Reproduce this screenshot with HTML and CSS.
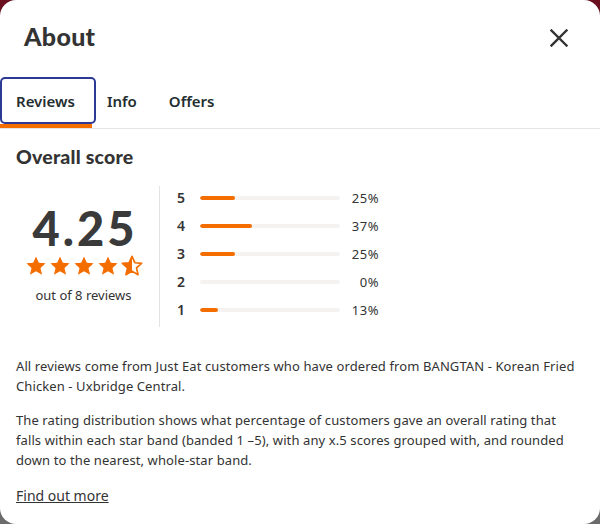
FILE: index.html
```html
<!DOCTYPE html>
<html lang="en">
<head>
<meta charset="utf-8">
<title>About</title>
<link rel="stylesheet" href="styles.css">
</head>
<body>
<div class="modal">
  <header class="header">
    <h1 class="title">About</h1>
    <button class="close" aria-label="Close">
      <svg width="18" height="18" viewBox="0 0 18 18"><path d="M1.5 1.5 L16.5 16.5 M16.5 1.5 L1.5 16.5" stroke="#333" stroke-width="2.4" stroke-linecap="square" fill="none"/></svg>
    </button>
  </header>
  <nav class="tabs">
    <div class="tab active"><span class="tab-label">Reviews</span><span class="tab-bar"></span></div>
    <div class="tab"><span class="tab-label">Info</span></div>
    <div class="tab"><span class="tab-label">Offers</span></div>
  </nav>
  <section class="content">
    <h2 class="subtitle">Overall score</h2>
    <div class="score">
      <div class="score-summary">
        <div class="score-value">4.25</div>
        <div class="stars">
          <svg class="star" viewBox="0 0 24 24"><path d="M12 1.5l3.1 6.9 7.4.7-5.6 5 1.7 7.4L12 17.6l-6.6 3.9 1.7-7.4-5.6-5 7.4-.7z" fill="#f36d00"/></svg>
          <svg class="star" viewBox="0 0 24 24"><path d="M12 1.5l3.1 6.9 7.4.7-5.6 5 1.7 7.4L12 17.6l-6.6 3.9 1.7-7.4-5.6-5 7.4-.7z" fill="#f36d00"/></svg>
          <svg class="star" viewBox="0 0 24 24"><path d="M12 1.5l3.1 6.9 7.4.7-5.6 5 1.7 7.4L12 17.6l-6.6 3.9 1.7-7.4-5.6-5 7.4-.7z" fill="#f36d00"/></svg>
          <svg class="star" viewBox="0 0 24 24"><path d="M12 1.5l3.1 6.9 7.4.7-5.6 5 1.7 7.4L12 17.6l-6.6 3.9 1.7-7.4-5.6-5 7.4-.7z" fill="#f36d00"/></svg>
          <svg class="star" viewBox="0 0 24 24"><path d="M12 1.5l3.1 6.9 7.4.7-5.6 5 1.7 7.4L12 17.6l-6.6 3.9 1.7-7.4-5.6-5 7.4-.7z" fill="none" stroke="#f36d00" stroke-width="1.8" stroke-linejoin="round"/><path d="M12 1.5v16.1l-6.6 3.9 1.7-7.4-5.6-5 7.4-.7z" fill="#f36d00"/></svg>
        </div>
        <div class="score-count">out of 8 reviews</div>
      </div>
      <div class="distribution">
        <div class="dist-row"><span class="dist-star">5</span><span class="dist-track"><span class="dist-fill" style="width:25%"></span></span><span class="dist-pct">25%</span></div>
        <div class="dist-row"><span class="dist-star">4</span><span class="dist-track"><span class="dist-fill" style="width:37%"></span></span><span class="dist-pct">37%</span></div>
        <div class="dist-row"><span class="dist-star">3</span><span class="dist-track"><span class="dist-fill" style="width:25%"></span></span><span class="dist-pct">25%</span></div>
        <div class="dist-row"><span class="dist-star">2</span><span class="dist-track"><span class="dist-fill" style="width:0%"></span></span><span class="dist-pct">0%</span></div>
        <div class="dist-row"><span class="dist-star">1</span><span class="dist-track"><span class="dist-fill" style="width:13%"></span></span><span class="dist-pct">13%</span></div>
      </div>
    </div>
    <p class="note">All reviews come from Just Eat customers who have ordered from BANGTAN - Korean Fried Chicken - Uxbridge Central.</p>
    <p class="note">The rating distribution shows what percentage of customers gave an overall rating that falls within each star band (banded 1 –5), with any x.5 scores grouped with, and rounded down to the nearest, whole-star band.</p>
    <a class="more" href="#">Find out more</a>
  </section>
</div>
</body>
</html>
```
FILE: styles.css
```css
*, *::before, *::after { box-sizing: border-box; }
html, body { margin: 0; padding: 0; }
body {
  width: 600px;
  height: 524px;
  background: linear-gradient(180deg, #6a0f1e 0%, #5b1a2c 30%, #6a6a6a 70%, #6b6b6b 100%);
  font-family: "Noto Sans", "Liberation Sans", sans-serif;
  color: #333;
  overflow: hidden;
}
.modal {
  width: 600px;
  height: 524px;
  background: #fff;
  border-radius: 16px;
  overflow: hidden;
}
.header {
  height: 77px;
  display: flex;
  align-items: center;
  justify-content: space-between;
  padding: 0 32px 0 24px;
}
.title {
  margin: 0;
  font-family: "Lato", sans-serif;
  font-weight: 900;
  font-size: 25px;
  letter-spacing: 0.3px;
  color: #333;
  padding-bottom: 6px;
}
.close {
  border: 0;
  background: none;
  padding: 0;
  width: 18px;
  height: 18px;
  display: flex;
  margin-top: -2px;
}
.tabs {
  display: flex;
  border-bottom: 1px solid #e6e6e6;
  height: 52px;
}
.tab {
  position: relative;
  padding: 0 16px;
  height: 51px;
  display: flex;
  align-items: center;
  padding-bottom: 4px;
  font-size: 15px;
  font-weight: 600;
  color: #242e30;
}
.tab.active::before {
  content: "";
  position: absolute;
  left: 0;
  top: 0;
  width: 96px;
  height: 47px;
  border: 2px solid #2c3a94;
  border-radius: 5px;
}
.tab-bar {
  position: absolute;
  left: 0;
  bottom: 0;
  width: 92px;
  height: 4px;
  background: #f36d00;
}
.content {
  padding: 16px 16px 0;
}
.subtitle {
  margin: 0;
  font-family: "Lato", sans-serif;
  font-weight: 900;
  font-size: 19.5px;
  line-height: 24px;
  letter-spacing: 0.2px;
  color: #333;
}
.score {
  display: flex;
  margin-top: 17px;
}
.score-summary {
  width: 144px;
  border-right: 1px solid #e3e3e3;
  display: flex;
  flex-direction: column;
  align-items: center;
  justify-content: center;
  padding-right: 8px;
  height: 141px;
}
.score-value {
  font-family: "Lato", sans-serif;
  font-weight: 900;
  font-size: 47px;
  line-height: 46px;
  color: #3a3a3a;
  letter-spacing: 3px;
  margin-right: -3px;
  margin-top: -4px;
}
.stars {
  display: flex;
  gap: 2px;
  margin-top: 4px;
}
.star {
  width: 22px;
  height: 22px;
}
.score-count {
  font-size: 13px;
  margin-top: 9px;
  color: #333;
}
.distribution {
  padding-left: 17px;
  margin-top: -2px;
  display: flex;
  flex-direction: column;
}
.dist-row {
  height: 28px;
  display: flex;
  align-items: center;
}
.dist-star {
  width: 23px;
  font-size: 14px;
  font-weight: 600;
  color: #333;
  margin-top: -2px;
}
.dist-track {
  width: 140px;
  height: 4px;
  background: #f5f3f1;
  border-radius: 2px;
  display: block;
  overflow: hidden;
}
.dist-fill {
  display: block;
  height: 100%;
  background: #f36d00;
  border-radius: 2px;
}
.dist-pct {
  width: 39px;
  text-align: right;
  font-size: 13px;
  color: #333;
  letter-spacing: 0.5px;
}
.note {
  margin: 29px 0 0;
  font-size: 13px;
  line-height: 20px;
  letter-spacing: 0.1px;
  color: #333;
}
.note + .note { margin-top: 14px; }
.more {
  display: inline-block;
  margin-top: 16px;
  font-size: 14px;
  line-height: 20px;
  color: #333;
  text-decoration: underline;
}
```
